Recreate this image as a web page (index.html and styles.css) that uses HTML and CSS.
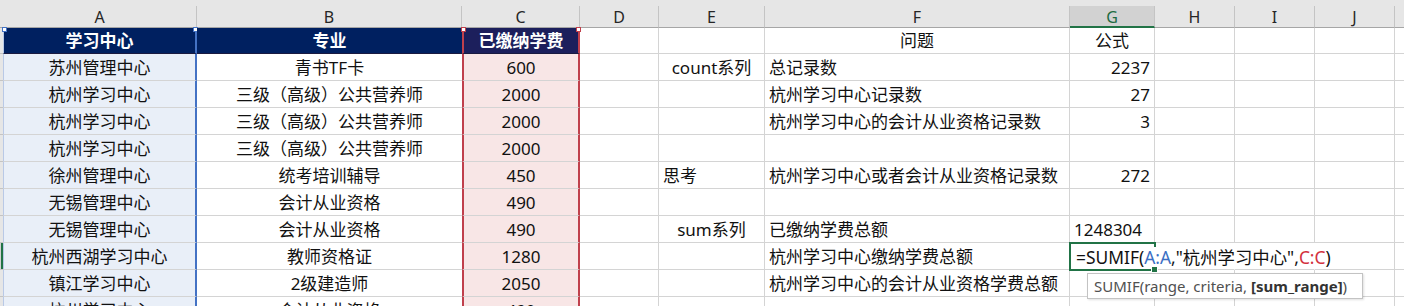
FILE: index.html
```html
<!DOCTYPE html>
<html lang="zh-CN">
<head>
<meta charset="utf-8">
<title>Sheet</title>
<link rel="stylesheet" href="styles.css">
</head>
<body>
<div class="topstrip"></div>
<div class="sheet">
  <!-- column headers -->
  <div class="ch stub"></div>
  <div class="ch">A</div>
  <div class="ch">B</div>
  <div class="ch">C</div>
  <div class="ch">D</div>
  <div class="ch">E</div>
  <div class="ch">F</div>
  <div class="ch sel">G</div>
  <div class="ch">H</div>
  <div class="ch">I</div>
  <div class="ch">J</div>
  <div class="ch last"></div>

  <!-- row 1 -->
  <div class="rh"></div>
  <div class="c ca hd hda">学习中心</div>
  <div class="c cb hd">专业</div>
  <div class="c cc hd hdc">已缴纳学费</div>
  <div class="c"></div>
  <div class="c"></div>
  <div class="c ctr">问题</div>
  <div class="c ctr">公式</div>
  <div class="c"></div><div class="c"></div><div class="c"></div><div class="c last"></div>

  <!-- row 2 -->
  <div class="rh"></div>
  <div class="c ca">苏州管理中心</div>
  <div class="c cb">青书TF卡</div>
  <div class="c cc">600</div>
  <div class="c"></div>
  <div class="c ctr">count系列</div>
  <div class="c lft">总记录数</div>
  <div class="c rgt">2237</div>
  <div class="c"></div><div class="c"></div><div class="c"></div><div class="c last"></div>

  <!-- row 3 -->
  <div class="rh"></div>
  <div class="c ca">杭州学习中心</div>
  <div class="c cb">三级（高级）公共营养师</div>
  <div class="c cc">2000</div>
  <div class="c"></div>
  <div class="c"></div>
  <div class="c lft">杭州学习中心记录数</div>
  <div class="c rgt">27</div>
  <div class="c"></div><div class="c"></div><div class="c"></div><div class="c last"></div>

  <!-- row 4 -->
  <div class="rh"></div>
  <div class="c ca">杭州学习中心</div>
  <div class="c cb">三级（高级）公共营养师</div>
  <div class="c cc">2000</div>
  <div class="c"></div>
  <div class="c"></div>
  <div class="c lft">杭州学习中心的会计从业资格记录数</div>
  <div class="c rgt">3</div>
  <div class="c"></div><div class="c"></div><div class="c"></div><div class="c last"></div>

  <!-- row 5 -->
  <div class="rh"></div>
  <div class="c ca">杭州学习中心</div>
  <div class="c cb">三级（高级）公共营养师</div>
  <div class="c cc">2000</div>
  <div class="c"></div>
  <div class="c"></div>
  <div class="c"></div>
  <div class="c"></div>
  <div class="c"></div><div class="c"></div><div class="c"></div><div class="c last"></div>

  <!-- row 6 -->
  <div class="rh"></div>
  <div class="c ca">徐州管理中心</div>
  <div class="c cb">统考培训辅导</div>
  <div class="c cc">450</div>
  <div class="c"></div>
  <div class="c lft">思考</div>
  <div class="c lft">杭州学习中心或者会计从业资格记录数</div>
  <div class="c rgt">272</div>
  <div class="c"></div><div class="c"></div><div class="c"></div><div class="c last"></div>

  <!-- row 7 -->
  <div class="rh"></div>
  <div class="c ca">无锡管理中心</div>
  <div class="c cb">会计从业资格</div>
  <div class="c cc">490</div>
  <div class="c"></div>
  <div class="c"></div>
  <div class="c"></div>
  <div class="c"></div>
  <div class="c"></div><div class="c"></div><div class="c"></div><div class="c last"></div>

  <!-- row 8 -->
  <div class="rh"></div>
  <div class="c ca">无锡管理中心</div>
  <div class="c cb">会计从业资格</div>
  <div class="c cc">490</div>
  <div class="c"></div>
  <div class="c ctr">sum系列</div>
  <div class="c lft">已缴纳学费总额</div>
  <div class="c lft">1248304</div>
  <div class="c"></div><div class="c"></div><div class="c"></div><div class="c last"></div>

  <!-- row 9 -->
  <div class="rh rhsel"></div>
  <div class="c ca">杭州西湖学习中心</div>
  <div class="c cb">教师资格证</div>
  <div class="c cc">1280</div>
  <div class="c"></div>
  <div class="c"></div>
  <div class="c lft">杭州学习中心缴纳学费总额</div>
  <div class="c lft active">
    <span class="formula">=SUMIF(<span class="refa">A:A</span>,"杭州学习中心",<span class="refc">C:C</span>)</span>
    <span class="handle"></span>
    <div class="tip">SUMIF(range, criteria, <b>[sum_range]</b>)</div>
  </div>
  <div class="c nob"></div><div class="c nob"></div><div class="c"></div><div class="c last"></div>

  <!-- row 10 -->
  <div class="rh"></div>
  <div class="c ca">镇江学习中心</div>
  <div class="c cb">2级建造师</div>
  <div class="c cc">2050</div>
  <div class="c"></div>
  <div class="c"></div>
  <div class="c lft">杭州学习中心的会计从业资格学费总额</div>
  <div class="c"></div>
  <div class="c"></div><div class="c"></div><div class="c"></div><div class="c last"></div>

  <!-- row 11 -->
  <div class="rh"></div>
  <div class="c ca">杭州学习中心</div>
  <div class="c cb">会计从业资格</div>
  <div class="c cc">490</div>
  <div class="c"></div>
  <div class="c"></div>
  <div class="c"></div>
  <div class="c"></div>
  <div class="c"></div><div class="c"></div><div class="c"></div><div class="c last"></div>
</div>
</body>
</html>
```

FILE: styles.css
```css
html, body {
  margin: 0;
  padding: 0;
  background: #ffffff;
  overflow: hidden;
  width: 1404px;
  height: 306px;
}

.topstrip {
  height: 6px;
  background: #e6e6e6;
}

.sheet {
  display: grid;
  grid-template-columns: 3px 194px 265px 118px 79px 106px 305px 85px 80px 80px 80px 1fr;
  grid-template-rows: 22px 26px repeat(10, 27px);
  font-family: "Noto Sans", "Noto Sans CJK SC", sans-serif;
  font-size: 17px;
  color: #111111;
}

.ch {
  box-sizing: border-box;
  background: #e6e6e6;
  border-right: 1px solid #c4c4c4;
  border-bottom: 1px solid #a6a6a6;
  font-family: "Noto Sans", sans-serif;
  font-size: 16px;
  color: #262626;
  display: flex;
  align-items: center;
  justify-content: center;
  line-height: 1;
  padding-top: 1px;
}
.ch.stub { border-right: 0; }
.ch.last { border-right: 0; }
.ch.sel {
  background: #d2d2d2;
  color: #1e6b41;
  border-bottom: 2px solid #217346;
}

.rh {
  box-sizing: border-box;
  background: #e6e6e6;
  border-bottom: 1px solid #c4c4c4;
}
.rhsel {
  background: #217346;
  border-left: 1px solid #d2d2d2;
}

.c {
  box-sizing: border-box;
  border-right: 1px solid #d4d4d4;
  border-bottom: 1px solid #d4d4d4;
  display: flex;
  align-items: center;
  justify-content: center;
  white-space: nowrap;
  line-height: 1;
  min-width: 0;
}
.c.last { border-right: 0; }
.c.nob { border-right-color: transparent; }

.ctr { justify-content: center; }
.lft { justify-content: flex-start; padding-left: 4px; }
.rgt { justify-content: flex-end; padding-right: 4px; }

.ca {
  background: #e9eff8;
  border-right: 2px solid #4472c4;
  border-left: 1px solid #b9c9e6;
}
.cb {
  border-right: 0;
}
.cc {
  background: #f8e6e6;
  border-left: 2px solid #c0404c;
  border-right: 2px solid #c0404c;
}

.hd {
  background: #002060;
  color: #ffffff;
  font-weight: bold;
  position: relative;
  border-bottom-color: #1a1a40;
}
.hdc {
  background: #1c1f5c;
}
.hda::before,
.hda::after,
.hdc::before,
.hdc::after {
  content: "";
  position: absolute;
  top: -1px;
  width: 3px;
  height: 3px;
  background: #ffffff;
  border: 1px solid #4472c4;
}
.hda::before { left: -2px; }
.hda::after { right: -3px; }
.hdc::before { left: -3px; border-color: #c0404c; }
.hdc::after { right: -3px; border-color: #c0404c; }

.active {
  position: relative;
  overflow: visible;
  padding-left: 5px;
  border: 2px solid #217346;
  margin: -1px 0 0 -1px;
  width: calc(100% + 2px);
  height: calc(100% + 2px);
  z-index: 2;
}
.formula {
  position: relative;
  z-index: 3;
  background: #ffffff;
  font-size: 17.4px;
  line-height: 20px;
  color: #111111;
}
.refa { color: #3b6fc4; }
.refc { color: #d3313e; }

.handle {
  position: absolute;
  right: -4px;
  bottom: -4px;
  width: 5px;
  height: 5px;
  background: #217346;
  border: 1px solid #ffffff;
}

.tip {
  position: absolute;
  left: 16px;
  top: 29px;
  width: 276px;
  height: 26px;
  box-sizing: border-box;
  background: #ffffff;
  border: 1px solid #c3c3c3;
  box-shadow: 1px 1px 2px rgba(0, 0, 0, 0.12);
  font-family: "Noto Sans", sans-serif;
  font-size: 15px;
  color: #505050;
  display: flex;
  align-items: center;
  padding-left: 6px;
  white-space: nowrap;
}
.tip b {
  color: #333333;
  font-weight: bold;
  margin-left: 4px;
}
```
